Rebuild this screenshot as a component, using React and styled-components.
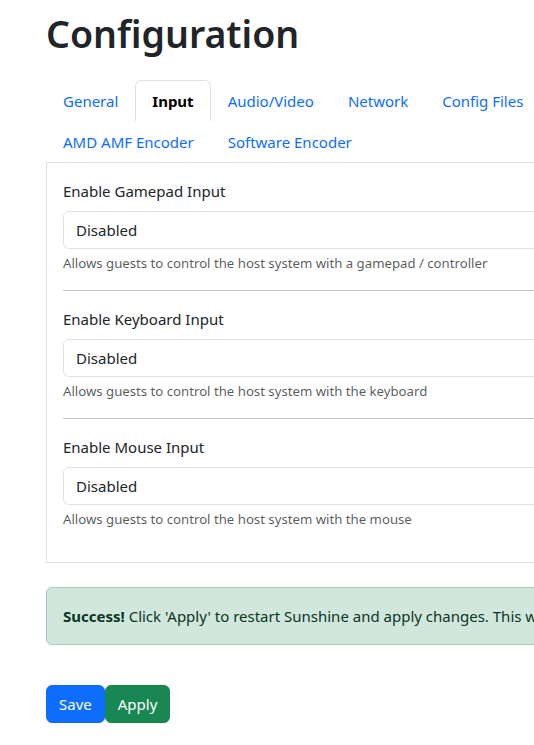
import React from 'react'
import styled, { createGlobalStyle } from 'styled-components'

const GlobalStyle = createGlobalStyle`
  html, body {
    margin: 0;
    padding: 0;
    background: #fff;
    overflow: hidden;
  }
  body {
    font-family: "Noto Sans", "Open Sans", sans-serif;
    font-size: 15px;
    line-height: 24px;
    color: #212529;
  }
  * { box-sizing: border-box; }
`

const Page = styled.div`
  width: 1116px;
  margin-left: 46px;
  padding-top: 10px;
`

const Title = styled.h1`
  margin: 0 0 22px;
  font-size: 37.5px;
  font-weight: 600;
  line-height: 48px;
`

const Tabs = styled.ul`
  display: flex;
  flex-wrap: wrap;
  list-style: none;
  margin: 0;
  padding: 0;
  border-bottom: 1px solid #dee2e6;
`

const Tab = styled.li`
  padding: 8px 16px;
  border: 1px solid ${p => (p.$active ? '#dee2e6' : 'transparent')};
  border-bottom: none;
  border-radius: 6px 6px 0 0;
  color: ${p => (p.$active ? '#000' : '#0d6efd')};
  font-weight: ${p => (p.$active ? 700 : 400)};
  background: #fff;
  cursor: pointer;
`

const Card = styled.div`
  border: 1px solid #dee2e6;
  border-top: none;
  padding: 16px;
`

const Field = styled.div`
  margin-bottom: 16px;
`

const Label = styled.label`
  display: block;
  margin-bottom: 8px;
`

const Select = styled.select`
  display: block;
  width: 100%;
  height: 38px;
  padding: 6px 36px 6px 12px;
  font: inherit;
  color: #212529;
  background: #fff;
  border: 1px solid #dee2e6;
  border-radius: 6px;
  appearance: none;
`

const Hint = styled.div`
  margin-top: 4px;
  font-size: 13.2px;
  line-height: 21px;
  color: rgba(33, 37, 41, 0.75);
`

const Divider = styled.hr`
  margin: 0 0 16px;
  border: 0;
  border-top: 1px solid #212529;
  opacity: 0.25;
`

const Alert = styled.div`
  margin: 24px 0 16px;
  padding: 16px;
  background: #d1e7dd;
  border: 1px solid #a3cfbb;
  border-radius: 6px;
  color: #0a3622;
  white-space: nowrap;
`

const Actions = styled.div`
  display: flex;
  margin-top: 40px;
`

const Button = styled.button`
  padding: 6px 12px;
  font: inherit;
  line-height: 24px;
  color: #fff;
  background: ${p => p.$bg};
  border: 1px solid ${p => p.$bg};
  border-radius: 6px;
  cursor: pointer;
`

const tabs = [
  'General',
  'Input',
  'Audio/Video',
  'Network',
  'Config Files',
  'Advanced',
  'NVIDIA NVENC Encoder',
  'Intel QuickSync Encoder',
  'AMD AMF Encoder',
  'Software Encoder',
]

const fields = [
  { label: 'Enable Gamepad Input', hint: 'Allows guests to control the host system with a gamepad / controller' },
  { label: 'Enable Keyboard Input', hint: 'Allows guests to control the host system with the keyboard' },
  { label: 'Enable Mouse Input', hint: 'Allows guests to control the host system with the mouse' },
]

export default function App() {
  return (
    <Page>
      <GlobalStyle />
      <Title>Configuration</Title>
      <Tabs>
        {tabs.map(t => (
          <Tab key={t} $active={t === 'Input'}>{t}</Tab>
        ))}
      </Tabs>
      <Card>
        {fields.map((f, i) => (
          <React.Fragment key={f.label}>
            {i > 0 && <Divider />}
            <Field>
              <Label>{f.label}</Label>
              <Select defaultValue="disabled">
                <option value="disabled">Disabled</option>
                <option value="enabled">Enabled</option>
              </Select>
              <Hint>{f.hint}</Hint>
            </Field>
          </React.Fragment>
        ))}
      </Card>
      <Alert>
        <b>Success!</b> Click 'Apply' to restart Sunshine and apply changes. This will terminate any running sessions.
      </Alert>
      <Actions>
        <Button $bg="#0d6efd">Save</Button>
        <Button $bg="#198754">Apply</Button>
      </Actions>
    </Page>
  )
}
